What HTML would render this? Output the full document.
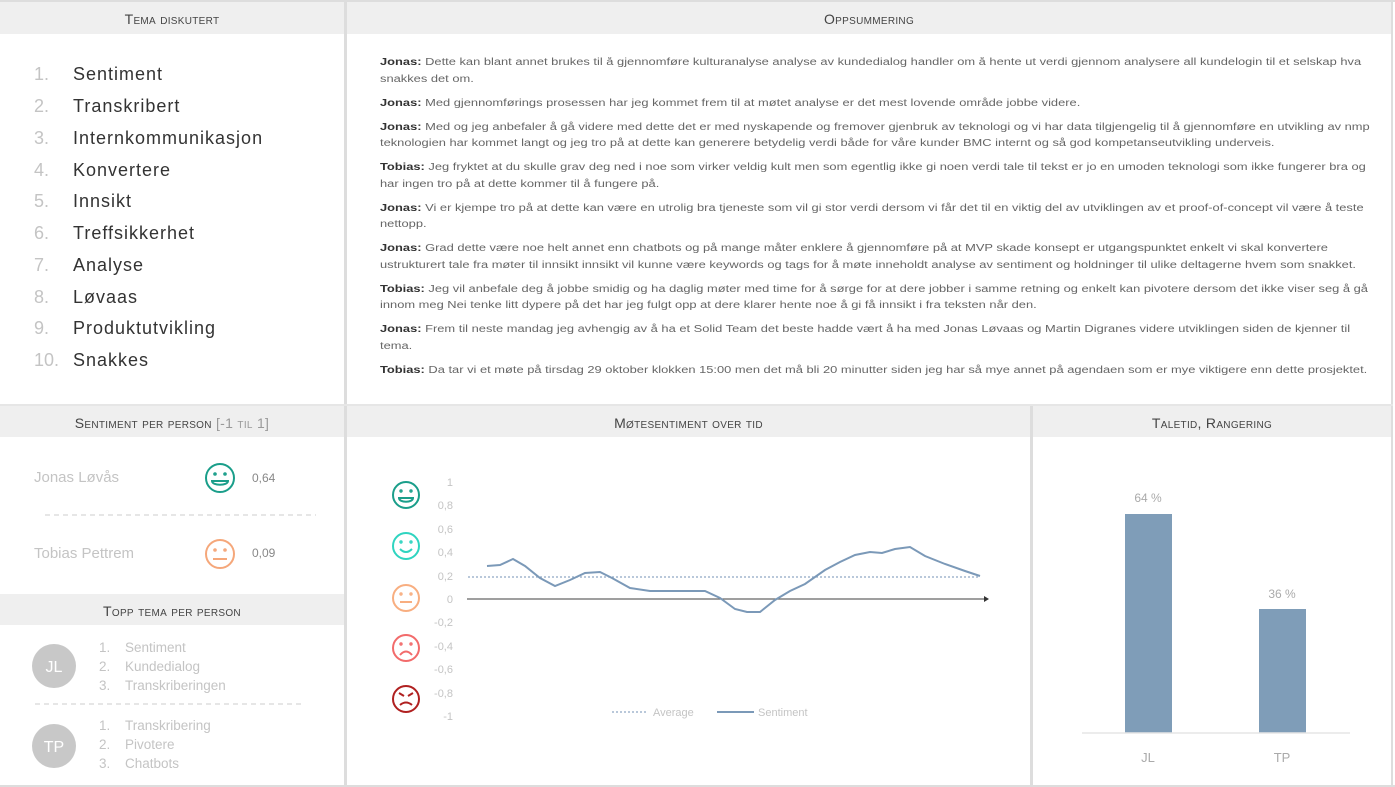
<!DOCTYPE html>
<html><head><meta charset="utf-8"><style>
*{margin:0;padding:0;box-sizing:border-box}
body{width:1395px;height:787px;background:#fff;font-family:"Liberation Sans",sans-serif;position:relative;overflow:hidden;color:#555}
.a{position:absolute}
.hd{position:absolute;background:#efefef;height:32px;text-align:center;font-size:14px;line-height:34px;color:#444;font-variant:small-caps;letter-spacing:.3px}
.li{position:absolute;left:34px;font-size:18px;color:#333;white-space:nowrap;letter-spacing:1px}
.li span{display:inline-block;width:39px;color:#c4c4c4;letter-spacing:0}
.sum{position:absolute;left:380px;top:55px;font-size:9.8px;color:#666;line-height:16.5px;transform:scaleX(1.315);transform-origin:0 0}
.sum p{margin-bottom:7.5px;white-space:nowrap}
.sum b{color:#333}
.tl{position:absolute;font-size:13.5px;color:#c4c4c4;line-height:19px}
.tl span{display:inline-block;width:26px}
</style></head><body>
<div class="a" style="left:0;top:0;width:1395px;height:2px;background:#ddd"></div>
<div class="a" style="left:344px;top:0;width:3px;height:787px;background:#ddd"></div>
<div class="a" style="left:1030px;top:405px;width:3px;height:382px;background:#ddd"></div>
<div class="a" style="left:1391px;top:0;width:2px;height:787px;background:#ddd"></div>
<div class="a" style="left:0;top:785px;width:1395px;height:2px;background:#ddd"></div>
<div class="a" style="left:0;top:404px;width:1393px;height:2px;background:#e6e6e6"></div>

<div class="hd" style="left:0;top:2px;width:344px">Tema diskutert</div>
<div class="hd" style="left:347px;top:2px;width:1044px">Oppsummering</div>
<div class="hd" style="left:0;top:406px;width:344px;height:31px">Sentiment per person <span style="color:#999">[-1 til 1]</span></div>
<div class="hd" style="left:347px;top:406px;width:683px;height:31px">Møtesentiment over tid</div>
<div class="hd" style="left:1033px;top:406px;width:358px;height:31px">Taletid, Rangering</div>
<div class="hd" style="left:0;top:594px;width:344px;height:31px">Topp tema per person</div>

<div class="li" style="top:64px"><span>1.</span>Sentiment</div>
<div class="li" style="top:96px"><span>2.</span>Transkribert</div>
<div class="li" style="top:128px"><span>3.</span>Internkommunikasjon</div>
<div class="li" style="top:160px"><span>4.</span>Konvertere</div>
<div class="li" style="top:191px"><span>5.</span>Innsikt</div>
<div class="li" style="top:223px"><span>6.</span>Treffsikkerhet</div>
<div class="li" style="top:255px"><span>7.</span>Analyse</div>
<div class="li" style="top:287px"><span>8.</span>Løvaas</div>
<div class="li" style="top:318px"><span>9.</span>Produktutvikling</div>
<div class="li" style="top:350px"><span>10.</span>Snakkes</div>

<div class="sum">
<p><b>Jonas:</b> Dette kan blant annet brukes til å gjennomføre kulturanalyse analyse av kundedialog handler om å hente ut verdi gjennom analysere all kundelogin til et selskap hva<br>snakkes det om.</p>
<p><b>Jonas:</b> Med gjennomførings prosessen har jeg kommet frem til at møtet analyse er det mest lovende område jobbe videre.</p>
<p><b>Jonas:</b> Med og jeg anbefaler å gå videre med dette det er med nyskapende og fremover gjenbruk av teknologi og vi har data tilgjengelig til å gjennomføre en utvikling av nmp<br>teknologien har kommet langt og jeg tro på at dette kan generere betydelig verdi både for våre kunder BMC internt og så god kompetanseutvikling underveis.</p>
<p><b>Tobias:</b> Jeg fryktet at du skulle grav deg ned i noe som virker veldig kult men som egentlig ikke gi noen verdi tale til tekst er jo en umoden teknologi som ikke fungerer bra og<br>har ingen tro på at dette kommer til å fungere på.</p>
<p><b>Jonas:</b> Vi er kjempe tro på at dette kan være en utrolig bra tjeneste som vil gi stor verdi dersom vi får det til en viktig del av utviklingen av et proof-of-concept vil være å teste<br>nettopp.</p>
<p><b>Jonas:</b> Grad dette være noe helt annet enn chatbots og på mange måter enklere å gjennomføre på at MVP skade konsept er utgangspunktet enkelt vi skal konvertere<br>ustrukturert tale fra møter til innsikt innsikt vil kunne være keywords og tags for å møte inneholdt analyse av sentiment og holdninger til ulike deltagerne hvem som snakket.</p>
<p><b>Tobias:</b> Jeg vil anbefale deg å jobbe smidig og ha daglig møter med time for å sørge for at dere jobber i samme retning og enkelt kan pivotere dersom det ikke viser seg å gå<br>innom meg Nei tenke litt dypere på det har jeg fulgt opp at dere klarer hente noe å gi få innsikt i fra teksten når den.</p>
<p><b>Jonas:</b> Frem til neste mandag jeg avhengig av å ha et Solid Team det beste hadde vært å ha med Jonas Løvaas og Martin Digranes videre utviklingen siden de kjenner til<br>tema.</p>
<p><b>Tobias:</b> Da tar vi et møte på tirsdag 29 oktober klokken 15:00 men det må bli 20 minutter siden jeg har så mye annet på agendaen som er mye viktigere enn dette prosjektet.</p>
</div>

<div class="a" style="left:34px;top:469px;font-size:15px;color:#c4c4c4">Jonas Løvås</div>
<div class="a" style="left:252px;top:471px;font-size:12px;color:#888">0,64</div>
<div class="a" style="left:34px;top:545px;font-size:15px;color:#c4c4c4">Tobias Pettrem</div>
<div class="a" style="left:252px;top:546px;font-size:12px;color:#888">0,09</div>

<div class="tl" style="left:99px;top:638px"><span>1.</span>Sentiment<br><span>2.</span>Kundedialog<br><span>3.</span>Transkriberingen</div>
<div class="tl" style="left:99px;top:716px"><span>1.</span>Transkribering<br><span>2.</span>Pivotere<br><span>3.</span>Chatbots</div>

<svg class="a" style="left:0;top:0" width="1395" height="787" font-family="Liberation Sans, sans-serif">
<line x1="45" y1="515" x2="316" y2="515" stroke="#ddd" stroke-width="1.5" stroke-dasharray="5,4"/>
<line x1="35" y1="704" x2="305" y2="704" stroke="#ddd" stroke-width="1.5" stroke-dasharray="5,4"/>
<circle cx="54" cy="666" r="22" fill="#c8c8c8"/><text x="54" y="672" font-size="16" fill="#fff" text-anchor="middle">JL</text>
<circle cx="54" cy="746" r="22" fill="#c8c8c8"/><text x="54" y="752" font-size="16" fill="#fff" text-anchor="middle">TP</text>

<g fill="none" stroke-width="2">
 <g stroke="#1a9e8a"><circle cx="220" cy="478" r="14"/><circle cx="215" cy="474" r=".8"/><circle cx="225" cy="474" r=".8"/><path d="M212 481h16c0 5-16 5-16 0z"/></g>
 <g stroke="#f5a77a"><circle cx="220" cy="554" r="14"/><circle cx="215" cy="550" r=".8"/><circle cx="225" cy="550" r=".8"/><path d="M213 559h14"/></g>
 <g stroke="#1a9e8a"><circle cx="406" cy="495" r="13"/><circle cx="401" cy="491" r=".7"/><circle cx="411" cy="491" r=".7"/><path d="M399 498h14c0 5-14 5-14 0z"/></g>
 <g stroke="#2fd4c0"><circle cx="406" cy="546" r="13"/><circle cx="401" cy="542" r=".7"/><circle cx="411" cy="542" r=".7"/><path d="M400 549q6 6 12 0"/></g>
 <g stroke="#f8ae80"><circle cx="406" cy="598" r="13"/><circle cx="401" cy="594" r=".7"/><circle cx="411" cy="594" r=".7"/><path d="M400 602h12"/></g>
 <g stroke="#f26b6b"><circle cx="406" cy="648" r="13"/><circle cx="401" cy="644" r=".7"/><circle cx="411" cy="644" r=".7"/><path d="M400 655q6-7 12 0"/></g>
 <g stroke="#b02020"><circle cx="406" cy="699" r="13"/><path d="M399 693l5 3M413 693l-5 3M400 705q6-5 12 0"/></g>
</g>
<g font-size="11" fill="#c4c4c4" text-anchor="end">
<text x="453" y="486">1</text><text x="453" y="509">0,8</text><text x="453" y="533">0,6</text><text x="453" y="556">0,4</text><text x="453" y="580">0,2</text><text x="453" y="603">0</text><text x="453" y="626">-0,2</text><text x="453" y="650">-0,4</text><text x="453" y="673">-0,6</text><text x="453" y="697">-0,8</text><text x="453" y="720">-1</text>
</g>
<line x1="468" y1="577" x2="980" y2="577" stroke="#8fa8c4" stroke-width="1.2" stroke-dasharray="2,2"/>
<line x1="467" y1="599" x2="984" y2="599" stroke="#666" stroke-width="1.2"/>
<path d="M984 596l5 3-5 3z" fill="#333"/>
<polyline fill="none" stroke="#7b99b8" stroke-width="2" points="487,566 500,565 513,559 525,566 540,578 555,586 570,580 585,573 600,572 612,578 630,588 650,591 705,591 720,598 735,609 747,612 760,612 775,600 790,591 805,584 825,570 840,562 855,555 870,552 882,553 895,549 910,547 925,556 945,564 965,571 980,576"/>
<line x1="612" y1="712" x2="646" y2="712" stroke="#8fa8c4" stroke-width="1.2" stroke-dasharray="2,2"/>
<text x="653" y="716" font-size="11" fill="#c4c4c4">Average</text>
<line x1="717" y1="712" x2="754" y2="712" stroke="#7b99b8" stroke-width="2"/>
<text x="758" y="716" font-size="11" fill="#c4c4c4">Sentiment</text>

<rect x="1125" y="514" width="47" height="219" fill="#7f9db8"/>
<rect x="1259" y="609" width="47" height="124" fill="#7f9db8"/>
<line x1="1082" y1="733" x2="1350" y2="733" stroke="#e5e5e5" stroke-width="1.5"/>
<g font-size="12" fill="#aaa" text-anchor="middle">
<text x="1148" y="502">64 %</text><text x="1282" y="598">36 %</text>
<text x="1148" y="762" font-size="13">JL</text><text x="1282" y="762" font-size="13">TP</text>
</g>
</svg>
</body></html>
